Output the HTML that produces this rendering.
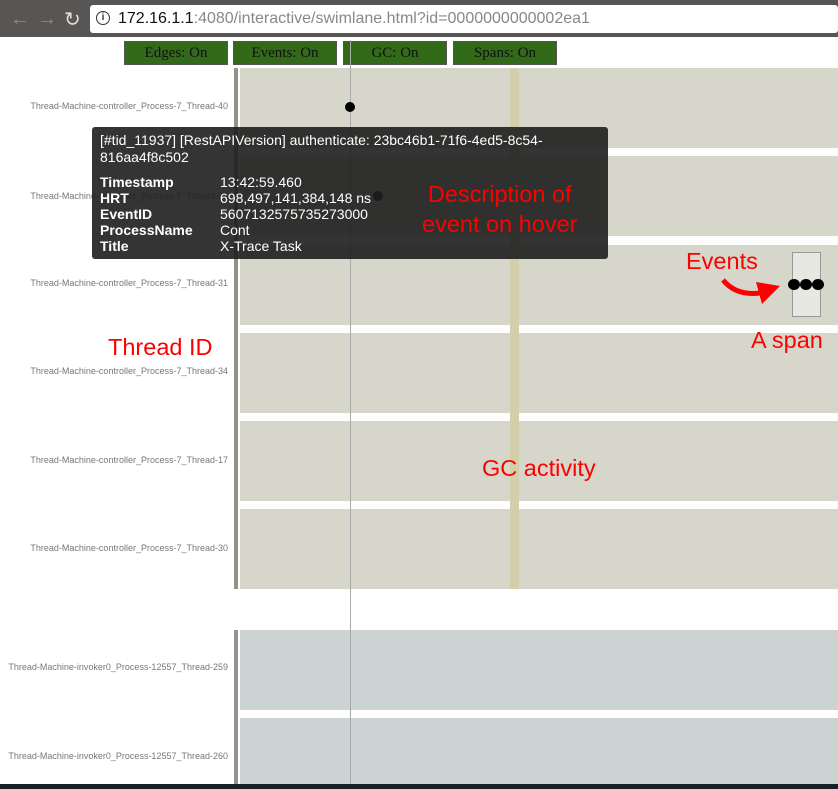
<!DOCTYPE html>
<html><head><style>
*{margin:0;padding:0;box-sizing:border-box}
body{width:838px;height:789px;overflow:hidden;background:#fff;font-family:"Liberation Sans",sans-serif;position:relative}
.abs{position:absolute}
.lane{position:absolute;left:240px;width:598px;height:80px;background:#d6d7ca}
.lane.b{background:#cbd4d3}
.lbl{position:absolute;right:610px;font-size:9px;color:#777;white-space:nowrap}
.btn{position:absolute;top:41px;height:24px;width:104px;background:#336a1a;border:1px solid #555;color:#111;font-family:"Liberation Serif",serif;font-size:15px;text-align:center;line-height:22px}
.red{position:absolute;color:#f00;font-size:23.5px;white-space:nowrap}
.dot{position:absolute;width:10px;height:10px;border-radius:50%;background:#000}
</style></head><body>
<div class="abs" style="left:0;top:0;width:838px;height:37px;background:#585654"></div>
<div class="abs" style="left:10px;top:8px;color:#8a8886;font-size:20px">&#8592;</div>
<div class="abs" style="left:37px;top:8px;color:#8a8886;font-size:20px">&#8594;</div>
<div class="abs" style="left:64px;top:7px;color:#ddd;font-size:20px">&#8635;</div>
<div class="abs" style="left:90px;top:5px;width:748px;height:28px;background:#fff;border-radius:3px"></div>
<div class="abs" style="left:96px;top:11px;width:14px;height:14px;border:1.5px solid #333;border-radius:50%;font-size:10px;line-height:11px;text-align:center;font-weight:bold;color:#333">i</div>
<div class="abs" style="left:118px;top:10px;font-size:16px;color:#888;white-space:nowrap"><span style="color:#111">172.16.1.1</span>:4080/interactive/swimlane.html?id=0000000000002ea1</div>

<div class="btn" style="left:124px">Edges: On</div>
<div class="btn" style="left:233px">Events: On</div>
<div class="btn" style="left:343px">GC: On</div>
<div class="btn" style="left:453px">Spans: On</div>

<div class="abs" style="left:234px;top:68px;width:4px;height:521px;background:#929289"></div>
<div class="abs" style="left:234px;top:630px;width:4px;height:159px;background:#8f9594"></div>

<div class="lane" style="top:68px"></div>
<div class="lane" style="top:156px"></div>
<div class="lane" style="top:245px"></div>
<div class="lane" style="top:333px"></div>
<div class="lane" style="top:421px"></div>
<div class="lane" style="top:509px"></div>
<div class="lane b" style="top:630px"></div>
<div class="lane b" style="top:718px;height:71px"></div>

<div class="abs" style="left:510px;top:68px;width:9px;height:521px;background:#d3cfab"></div>
<div class="abs" style="left:350px;top:40px;width:1px;height:749px;background:#aaa"></div>

<div class="lbl" style="top:101px">Thread-Machine-controller_Process-7_Thread-40</div>
<div class="lbl" style="top:191px">Thread-Machine-controller_Process-7_Thread-36</div>
<div class="lbl" style="top:278px">Thread-Machine-controller_Process-7_Thread-31</div>
<div class="lbl" style="top:366px">Thread-Machine-controller_Process-7_Thread-34</div>
<div class="lbl" style="top:455px">Thread-Machine-controller_Process-7_Thread-17</div>
<div class="lbl" style="top:543px">Thread-Machine-controller_Process-7_Thread-30</div>
<div class="lbl" style="top:662px">Thread-Machine-invoker0_Process-12557_Thread-259</div>
<div class="lbl" style="top:751px">Thread-Machine-invoker0_Process-12557_Thread-260</div>

<div class="dot" style="left:345px;top:102px"></div>
<div class="dot" style="left:373px;top:191px"></div>

<div class="abs" style="left:792px;top:252px;width:29px;height:65px;background:#e8e8e3;border:1px solid #999"></div>
<div class="dot" style="left:788px;top:279px;width:12px;height:11px"></div>
<div class="dot" style="left:800px;top:279px;width:12px;height:11px"></div>
<div class="dot" style="left:812px;top:279px;width:12px;height:11px"></div>

<div class="red" style="left:686px;top:248px">Events</div>
<svg class="abs" style="left:718px;top:276px" width="70" height="32"><path d="M5 4 Q18 20 42 17" stroke="#f00" stroke-width="5" fill="none"/><polygon points="38,6 62,10 44,28" fill="#f00"/></svg>
<div class="red" style="left:751px;top:327px">A span</div>
<div class="red" style="left:108px;top:334px">Thread ID</div>
<div class="red" style="left:482px;top:455px">GC activity</div>

<div class="abs" style="left:92px;top:127px;width:516px;height:132px;background:rgba(30,30,30,0.9);border-radius:3px;color:#fff;font-size:14px;padding:5px 8px;line-height:16.5px">
<div>[#tid_11937] [RestAPIVersion] authenticate: 23bc46b1-71f6-4ed5-8c54-<br>816aa4f8c502</div>
<table style="border-collapse:collapse;margin-top:9px;font-size:14px;line-height:16px">
<tr><td style="font-weight:bold;width:120px">Timestamp</td><td>13:42:59.460</td></tr>
<tr><td style="font-weight:bold">HRT</td><td>698,497,141,384,148 ns</td></tr>
<tr><td style="font-weight:bold">EventID</td><td>5607132575735273000</td></tr>
<tr><td style="font-weight:bold">ProcessName</td><td>Cont</td></tr>
<tr><td style="font-weight:bold">Title</td><td>X-Trace Task</td></tr>
</table>
</div>
<div class="red" style="left:422px;top:179px;line-height:30px;text-align:center">Description of<br>event on hover</div>

<div class="abs" style="left:0;top:784px;width:838px;height:5px;background:#1a2125"></div>
</body></html>
